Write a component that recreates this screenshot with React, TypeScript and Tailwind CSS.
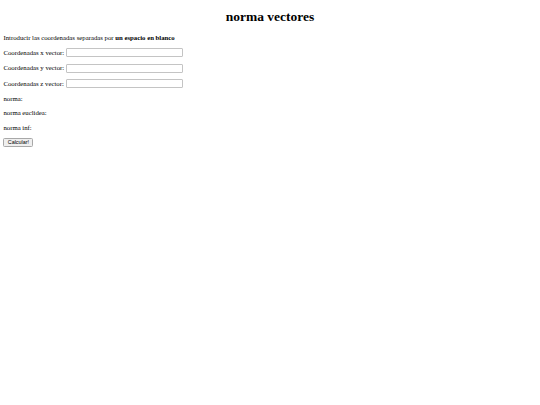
export default function App() {
  const ejes = ["x", "y", "z"];
  return (
    <div className="min-h-screen bg-white px-[3.4px] font-['Liberation_Serif',serif] text-[6.75px] leading-[7.8px] text-black">
      <h1 className="mb-[9px] pt-[9px] text-center text-[13.5px] font-bold leading-[15.5px]">norma vectores</h1>
      <p className="my-[6.75px]">
        Introducir las coordenadas separadas por <b>un espacio en blanco</b>
      </p>
      {ejes.map((eje) => (
        <p key={eje} className="my-[6.5px] flex items-center">
          <span>Coordenadas {eje} vector:</span>
          <input
            type="text"
            className="ml-[2px] h-[9px] w-[117px] rounded-[1px] border border-[#c4c4c4] bg-white"
          />
        </p>
      ))}
      <p className="my-[6.75px]">norma:</p>
      <p className="my-[6.75px]">norma euclidea:</p>
      <p className="my-[6.75px]">norma inf:</p>
      <button className="flex h-[9px] w-[30px] items-center justify-center rounded-[1.5px] border border-[#a8a8a8] bg-[#efefef] font-['Liberation_Sans',sans-serif] text-[5.4px] leading-none">
        Calcular!
      </button>
    </div>
  );
}
